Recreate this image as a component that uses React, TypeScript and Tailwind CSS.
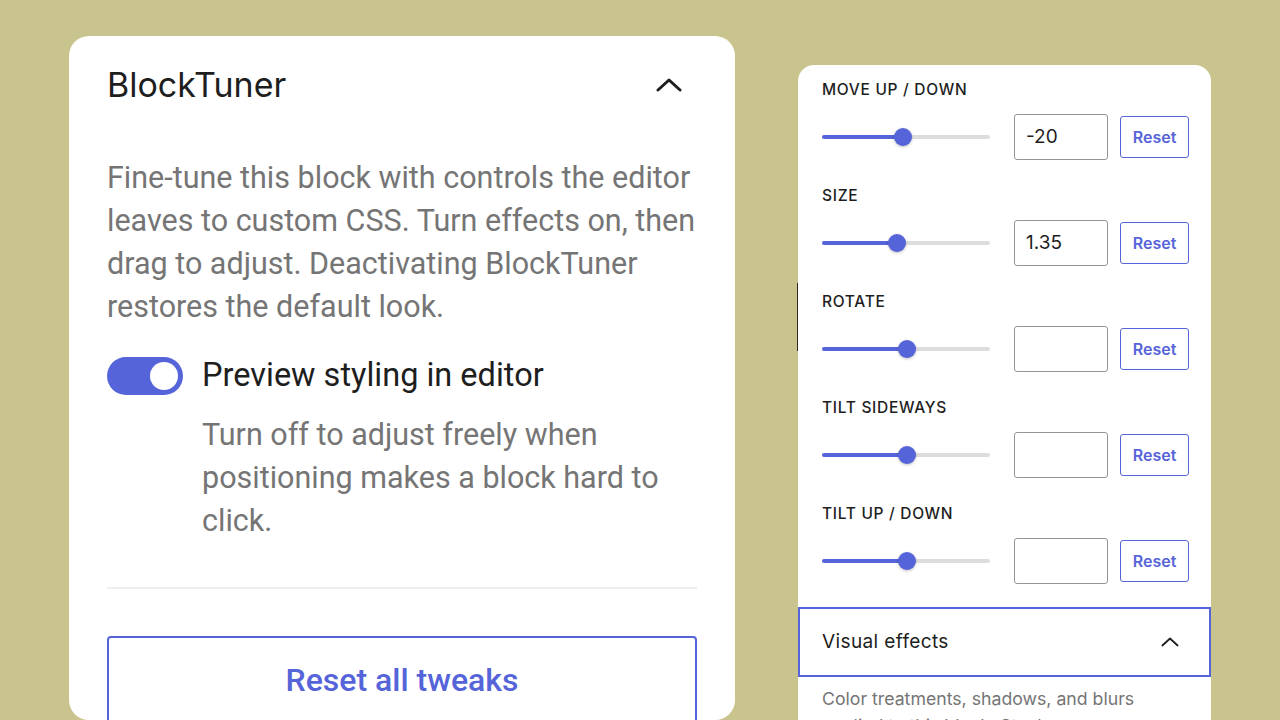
// Two panels on an olive backdrop: the BlockTuner intro card on the left and
// the transform sliders panel on the right.

type SliderRow = {
  label: string;
  /** Thumb position along the track, 0–1. */
  pos: number;
  value: string;
};

const rows: SliderRow[] = [
  { label: 'Move up / down', pos: 0.48, value: '-20' },
  { label: 'Size', pos: 0.445, value: '1.35' },
  { label: 'Rotate', pos: 0.505, value: '' },
  { label: 'Tilt sideways', pos: 0.505, value: '' },
  { label: 'Tilt up / down', pos: 0.505, value: '' },
];

const body = { fontFamily: 'Roboto, "Noto Sans", sans-serif' };
const ui = { fontFamily: 'Inter, "Noto Sans", sans-serif' };

function Chevron({ className, stroke }: { className: string; stroke: number }) {
  return (
    <svg viewBox="0 0 26 14" fill="none" className={className}>
      <path d="M2 12 L13 2 L24 12" stroke="currentColor" strokeWidth={stroke} strokeLinecap="round" strokeLinejoin="round" />
    </svg>
  );
}

function Slider({ pos }: { pos: number }) {
  return (
    <div className="relative h-[18px] w-[168px] shrink-0">
      <div className="absolute top-[7px] h-[4px] w-full rounded-full bg-[#dddddd]" />
      <div
        className="absolute top-[7px] h-[4px] rounded-full bg-[#5664d9]"
        style={{ width: `${pos * 100}%` }}
      />
      <div
        className="absolute top-0 h-[18px] w-[18px] -translate-x-1/2 rounded-full bg-[#5664d9] shadow-[0_1px_3px_rgba(0,0,0,0.25)]"
        style={{ left: `${pos * 100}%` }}
      />
    </div>
  );
}

function TransformRow({ row }: { row: SliderRow }) {
  return (
    <div className="h-[106px]">
      <div className="pt-[13px] text-[15.5px] font-medium uppercase tracking-[0.045em] text-[#1e1e1e]" style={ui}>
        {row.label}
      </div>
      <div className="mt-[13px] flex items-center">
        <Slider pos={row.pos} />
        <div className="ml-[24px] flex h-[46px] w-[94px] shrink-0 items-center rounded-[3px] border border-[#949494] px-[11px] text-[19px] text-[#1e1e1e]" style={ui}>
          {row.value}
        </div>
        <button
          type="button"
          className="ml-[12px] h-[42px] w-[69px] shrink-0 rounded-[3px] border border-[#5664d9] text-[16px] font-semibold text-[#5664d9]"
          style={ui}
        >
          Reset
        </button>
      </div>
    </div>
  );
}

export default function App() {
  return (
    <div className="flex h-[720px] w-[1280px] overflow-hidden bg-[#c9c48e]">
      <div className="ml-[69px] mt-[36px] w-[666px] rounded-[20px] bg-white px-[38px] pt-[32px]">
        <div className="flex h-[34px] items-center justify-between">
          <h2 className="text-[34px] leading-none text-[#1e1e1e]" style={ui}>
            BlockTuner
          </h2>
          <Chevron className="mr-[15px] h-[14px] w-[26px] text-[#1e1e1e]" stroke={3} />
        </div>

        <p className="mt-[54px] whitespace-nowrap text-[30.5px] leading-[43px] text-[#757575]" style={body}>
          Fine-tune this block with controls the editor
          <br />
          leaves to custom CSS. Turn effects on, then
          <br />
          drag to adjust. Deactivating BlockTuner
          <br />
          restores the default look.
        </p>

        <div className="mt-[26px] flex items-center gap-[19px]">
          <div className="flex h-[38px] w-[76px] items-center justify-end rounded-full bg-[#5664d9] pr-[5px]">
            <div className="h-[28px] w-[28px] rounded-full bg-white" />
          </div>
          <span className="text-[32.5px] leading-[43px] text-[#1e1e1e]" style={body}>
            Preview styling in editor
          </span>
        </div>
        <p className="ml-[95px] mt-[16px] whitespace-nowrap text-[30.5px] leading-[43px] text-[#757575]" style={body}>
          Turn off to adjust freely when
          <br />
          positioning makes a block hard to
          <br />
          click.
        </p>

        <div className="mt-[45px] h-[2px] bg-[#eeeeee]" />

        <button
          type="button"
          className="mt-[47px] h-[90px] w-full rounded-[4px] border-2 border-[#5664d9] pb-[2px] text-[32px] font-medium text-[#5664d9]"
          style={body}
        >
          Reset all tweaks
        </button>
      </div>

      <div className="relative ml-[63px] mt-[65px] w-[413px] rounded-t-[16px] bg-white">
        <div className="absolute left-[-1px] top-[218px] h-[68px] w-[1px] bg-[#2a2a2a]" />
        <div className="pb-[12px] pl-[24px] pr-[22px]">
          {rows.map((r) => (
            <TransformRow key={r.label} row={r} />
          ))}
        </div>
        <div className="flex h-[70px] items-center justify-between border-2 border-[#5664d9] pl-[22px] pr-[30px]">
          <span className="text-[19px] tracking-[0.02em] text-[#1e1e1e]" style={ui}>
            Visual effects
          </span>
          <Chevron className="h-[10px] w-[18px] text-[#1e1e1e]" stroke={2.6} />
        </div>
        <p className="px-[24px] pt-[8px] text-[17.7px] leading-[27px] text-[#757575]" style={ui}>
          Color treatments, shadows, and blurs applied to this block. Stack as many as you like.
        </p>
      </div>
    </div>
  );
}
